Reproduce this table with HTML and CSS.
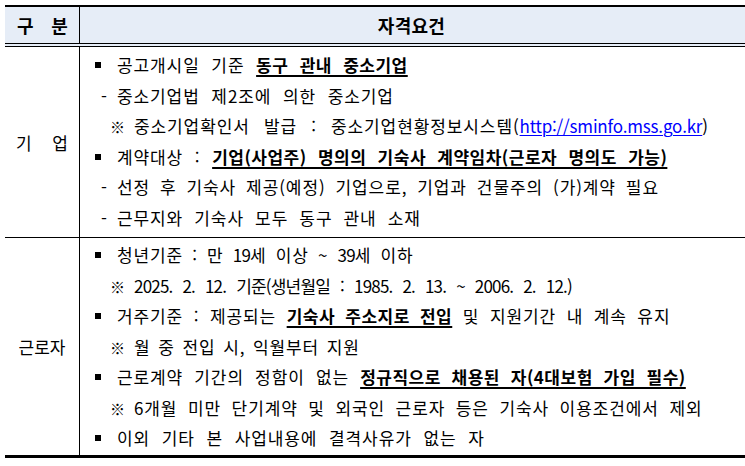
FILE: index.html
```html
<!DOCTYPE html>
<html lang="ko">
<head>
<meta charset="utf-8">
<link rel="stylesheet" href="styles.css">
</head>
<body>
<div class="table">
  <div class="head">
    <div class="hleft">구 분</div>
    <div class="hright">자격요건</div>
  </div>
  <div class="section first">
    <div class="label">기 업</div>
    <div class="content">
      <div class="line sq"><span class="mk"></span>공고개시일 기준 <b class="u">동구 관내 중소기업</b></div>
      <div class="line dash"><span class="mk">-</span>중소기업법 제2조에 의한 중소기업</div>
      <div class="line note ws-wide"><span class="mk">※</span>중소기업확인서 발급 : 중소기업현황정보시스템(<span class="link">http://sminfo.mss.go.kr</span>)</div>
      <div class="line sq"><span class="mk"></span>계약대상 : <b class="u">기업(사업주) 명의의 기숙사 계약임차(근로자 명의도 가능)</b></div>
      <div class="line dash ws-4"><span class="mk">-</span>선정 후 기숙사 제공(예정) 기업으로, 기업과 건물주의 (가)계약 필요</div>
      <div class="line dash ws-55"><span class="mk">-</span>근무지와 기숙사 모두 동구 관내 소재</div>
    </div>
  </div>
  <div class="section second">
    <div class="label">근로자</div>
    <div class="content">
      <div class="line sq ws-35"><span class="mk"></span>청년기준 : 만 <span class="num">19</span>세 이상 ~ <span class="num">39</span>세 이하</div>
      <div class="line note"><span class="mk">※</span><span class="date">2025. 2. 12. 기준(생년월일 : 1985. 2. 13. ~ 2006. 2. 12.)</span></div>
      <div class="line sq ws-5"><span class="mk"></span>거주기준 : 제공되는 <b class="u">기숙사 주소지로 전입</b> 및 지원기간 내 계속 유지</div>
      <div class="line note ws-3"><span class="mk">※</span>월 중 전입 시, 익월부터 지원</div>
      <div class="line sq ws-55"><span class="mk"></span>근로계약 기간의 정함이 없는 <b class="u">정규직으로 채용된 자(4대보험 가입 필수)</b></div>
      <div class="line note ws-5"><span class="mk">※</span>6개월 미만 단기계약 및 외국인 근로자 등은 기숙사 이용조건에서 제외</div>
      <div class="line sq"><span class="mk"></span>이외 기타 본 사업내용에 결격사유가 없는 자</div>
    </div>
  </div>
</div>
</body>
</html>
```

FILE: styles.css
```css
html, body {
  margin: 0;
  padding: 0;
  background: #ffffff;
}

body {
  font-family: "Noto Sans CJK KR", "Noto Sans", sans-serif;
  color: #000000;
}

.table {
  margin: 5px 0 0 5px;
  width: 740px;
  border-top: 2px solid #000;
  border-bottom: 3px solid #000;
}

.head {
  display: grid;
  grid-template-columns: 75px 1fr;
  background: #e6edf7;
  border-bottom: 4px double #000;
  height: 40px;
  box-sizing: border-box;
}

.hleft,
.hright {
  display: flex;
  align-items: center;
  justify-content: center;
  font-size: 18px;
  font-weight: bold;
  letter-spacing: 0.3px;
}

.hleft {
  border-right: 1px solid #000;
  word-spacing: 12px;
  padding-left: 1px;
}

.hright {
  padding-right: 2px;
}

.section {
  display: grid;
  grid-template-columns: 75px 1fr;
}

.section.first {
  border-bottom: 1px solid #000;
}

.label {
  border-right: 1px solid #000;
  display: flex;
  align-items: center;
  justify-content: center;
  font-size: 17px;
  word-spacing: 16px;
}

.content {
  font-size: 17px;
  letter-spacing: 0.9px;
  word-spacing: 6px;
}

.first .content {
  padding: 3px 0 4px;
}

.second .content {
  padding: 2px 0 1.5px;
}

.line {
  height: 30.5px;
  line-height: 30.5px;
  white-space: nowrap;
}

.line .mk {
  display: inline-block;
}

.sq {
  padding-left: 15px;
}

.sq .mk {
  width: 6px;
  height: 6px;
  background: #000;
  margin-right: 16px;
  vertical-align: 4px;
}

.dash {
  padding-left: 21px;
}

.dash .mk {
  width: 16px;
  letter-spacing: 0;
}

.note {
  padding-left: 30px;
}

.note .mk {
  width: 24px;
  font-size: 15px;
  letter-spacing: 0;
}

.ws-wide { word-spacing: 8.5px; }
.ws-55 { word-spacing: 5.5px; }
.ws-5 { word-spacing: 4.9px; }
.ws-4 { word-spacing: 4.3px; }
.ws-35 { word-spacing: 3.5px; }
.ws-3 { word-spacing: 2px; }

.u {
  text-decoration: underline;
  text-decoration-thickness: 1.5px;
  text-underline-offset: 3px;
  letter-spacing: 0.5px;
}

.link {
  color: #0000ff;
  text-decoration: underline;
  text-decoration-thickness: 1px;
  text-underline-offset: 2px;
  letter-spacing: -0.2px;
}

.num {
  letter-spacing: -0.8px;
}

.date {
  letter-spacing: -0.8px;
}
```
